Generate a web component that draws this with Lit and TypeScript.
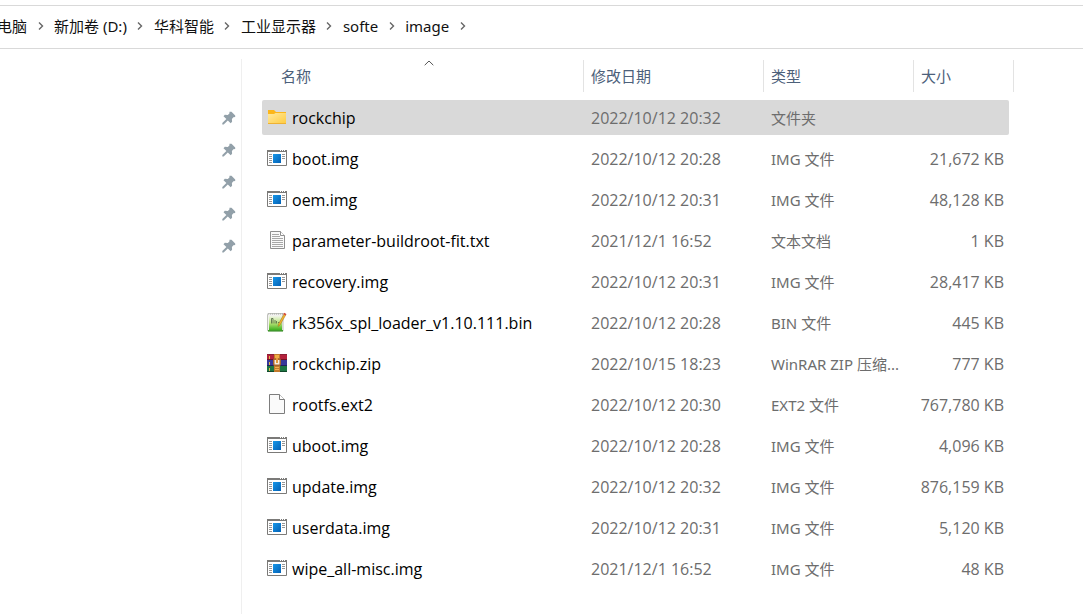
import { LitElement, html, svg, css, nothing } from "lit";
import { customElement, property } from "lit/decorators.js";

type IconKind = "folder" | "image" | "text" | "bin" | "archive" | "blank";

interface FileEntry {
  name: string;
  icon: IconKind;
  modified: string;
  type: string;
  size: string;
}

const CRUMBS = ["电脑", "新加卷 (D:)", "华科智能", "工业显示器", "softe", "image"];

const PINS = [1, 2, 3, 4, 5];

const FILES: FileEntry[] = [
  { name: "rockchip", icon: "folder", modified: "2022/10/12 20:32", type: "文件夹", size: "" },
  { name: "boot.img", icon: "image", modified: "2022/10/12 20:28", type: "IMG 文件", size: "21,672 KB" },
  { name: "oem.img", icon: "image", modified: "2022/10/12 20:31", type: "IMG 文件", size: "48,128 KB" },
  { name: "parameter-buildroot-fit.txt", icon: "text", modified: "2021/12/1 16:52", type: "文本文档", size: "1 KB" },
  { name: "recovery.img", icon: "image", modified: "2022/10/12 20:31", type: "IMG 文件", size: "28,417 KB" },
  { name: "rk356x_spl_loader_v1.10.111.bin", icon: "bin", modified: "2022/10/12 20:28", type: "BIN 文件", size: "445 KB" },
  { name: "rockchip.zip", icon: "archive", modified: "2022/10/15 18:23", type: "WinRAR ZIP 压缩...", size: "777 KB" },
  { name: "rootfs.ext2", icon: "blank", modified: "2022/10/12 20:30", type: "EXT2 文件", size: "767,780 KB" },
  { name: "uboot.img", icon: "image", modified: "2022/10/12 20:28", type: "IMG 文件", size: "4,096 KB" },
  { name: "update.img", icon: "image", modified: "2022/10/12 20:32", type: "IMG 文件", size: "876,159 KB" },
  { name: "userdata.img", icon: "image", modified: "2022/10/12 20:31", type: "IMG 文件", size: "5,120 KB" },
  { name: "wipe_all-misc.img", icon: "image", modified: "2021/12/1 16:52", type: "IMG 文件", size: "48 KB" },
];

const ICONS = {
  folder: svg`
    <defs>
      <linearGradient id="f" x1="0" y1="0" x2="1" y2="1">
        <stop offset="0" stop-color="#ffe9a0" /><stop offset="1" stop-color="#ffcb3d" />
      </linearGradient>
    </defs>
    <path d="M1 3h6l2 2h10v4H1z" fill="#fcb61a" />
    <path d="M1 7h6l1.500-1H19v11H1z" fill="url(#f)" />
    <path d="M1 16h18v1H1z" fill="#eeb133" />`,
  image: svg`
    <defs>
      <linearGradient id="b" x1="0" y1="0" x2="1" y2="1">
        <stop offset="0" stop-color="#1797e8" /><stop offset="1" stop-color="#0461b5" />
      </linearGradient>
    </defs>
    <path d="M.5 2.500h19v15H.5z" fill="#fff" stroke="#7b7a78" />
    <path d="M0 2h20v2H0z" fill="#7b7a78" />
    <path d="M13 2.500h1M15 2.500h1M17 2.500h1" stroke="#fff" />
    <path d="M2 6.500h3M2 8.500h3M2 10.500h3M2 12.500h3M2 14.500h3M15 6.500h3M15 8.500h3M15 10.500h3" stroke="#969696" />
    <path d="M6 6h8v9H6z" fill="url(#b)" />`,
  text: svg`
    <path d="M3.500 1.500h10l4 4v13h-14z" fill="#fafafa" stroke="#8f8f8f" />
    <path d="M13.500 1.500v4h4" fill="#fff" stroke="#8f8f8f" />
    <path d="M5 4.500h7M5 6.500h8M5 8.500h11M5 10.500h11M5 12.500h11M5 14.500h11M5 16.500h11" stroke="#a8a8a8" />`,
  blank: svg`
    <path d="M2.500.5h10l5 5v14h-15z" fill="#fafafa" stroke="#7d7d7d" />
    <path d="M12.500.5v5h5" fill="#fff" stroke="#7d7d7d" />`,
  bin: svg`
    <defs>
      <linearGradient id="g" x1="0" y1="0" x2="0" y2="1">
        <stop offset="0" stop-color="#f0f5e8" /><stop offset=".5" stop-color="#b8e478" /><stop offset="1" stop-color="#3fb020" />
      </linearGradient>
    </defs>
    <path d="M.5 2.500q0-1 1-1h14.500v17.500H1.500q-1 0-1-1z" fill="#f1f1ee" stroke="#bfc1bb" />
    <path d="M1 2h15" stroke="#a5a5a5" stroke-dasharray="1 1" />
    <path d="M2 4h13v14H2z" fill="url(#g)" />
    <path d="M1 18h15v1.500H1z" fill="#3f9b2b" />
    <path d="M4.500 11.500V6.500h1.500v5M8 11.500V8M9.500 11.500V9M11 10.500h1.500" fill="none" stroke="#4d6340" stroke-width=".8" />
    <path d="M17.300 1.500l1.700 1-6 10.500-2 1.500.5-2.500z" fill="#f3b52a" stroke="#9a6a25" stroke-width=".5" />
    <path d="M17 .8l2.300 1.300-.8 1.300-2.200-1.300z" fill="#d6453b" />`,
  archive: svg`
    <path d="M0 1h20v6H0z" fill="#b3213c" />
    <path d="M0 7h20v6H0z" fill="#38389a" />
    <path d="M0 13h20v6H0z" fill="#1d7543" />
    <path d="M0 1.500h20" stroke="#8a1e35" />
    <path d="M0 6.500h20" stroke="#741126" />
    <path d="M0 12.500h20" stroke="#20215f" />
    <path d="M0 18.500h20" stroke="#114829" />
    <path d="M2.500 3v3M2.500 9v3M2.500 15v3" stroke="#e0b84c" />
    <path d="M7 1h6v18H7z" fill="#c27a2c" />
    <path d="M8 2h4v3H8z" fill="#f0ad45" />
    <path d="M6 7q0-1.500 1.500-1.500h5Q14 5.500 14 7v4q0 2-2 2H8q-2 0-2-2z" fill="#a8652c" />
    <path d="M7.500 7h5v4.500h-5z" fill="#f8efe0" />
    <path d="M9 5h2v5H9z" fill="#e39a3c" />
    <path d="M8 14h4v1H8zM8 16h4v1H8z" fill="#f0b050" />`,
};

@customElement("file-icon")
export class FileIcon extends LitElement {
  static styles = css`
    :host { display: block; flex: none; width: 20px; height: 20px; margin-bottom: 2px; }
    .glyph { display: block; width: 20px; height: 20px; }
  `;

  @property() kind: IconKind = "blank";

  render() {
    return html`<svg class="glyph" viewBox="0 0 20 20" aria-hidden="true">${ICONS[this.kind]}</svg>`;
  }
}

@customElement("path-bar")
export class PathBar extends LitElement {
  static styles = css`
    :host { display: block; margin-top: 5px; border-top: 1px solid #d9d9d9; border-bottom: 1px solid #d9d9d9; overflow: hidden; font-family: "Noto Sans", "Noto Sans CJK SC", sans-serif; }
    .trail { display: flex; align-items: center; height: 40px; margin: 0 0 0 -3px; padding: 0 0 2px; list-style: none; }
    .crumb { display: flex; align-items: center; white-space: nowrap; }
    .link { color: #111; text-decoration: none; }
    .next { display: flex; align-items: center; justify-content: center; width: 27px; height: 24px; padding: 0; border: 0; background: none; }
    .chevron { display: block; width: 6px; height: 8px; }
  `;

  render() {
    return html`
      <nav aria-label="路径">
        <ol class="trail">
          ${CRUMBS.map(
            (name) => html`
              <li class="crumb">
                <a class="link" href="#">${name}</a>
                <button class="next" type="button" aria-label=${name}>
                  <svg class="chevron" viewBox="0 0 6 8" aria-hidden="true">
                    <path d="M1 .5L4.500 4 1 7.500" fill="none" stroke="#666" stroke-width="1.400" />
                  </svg>
                </button>
              </li>`
          )}
        </ol>
      </nav>`;
  }
}

@customElement("pin-list")
export class PinList extends LitElement {
  static styles = css`
    :host { display: block; flex: none; box-sizing: border-box; width: 242px; border-right: 1px solid #efefef; }
    .pins { margin: 0; padding: 43px 5px 0 0; list-style: none; }
    .item { display: flex; justify-content: flex-end; align-items: center; height: 32px; }
    .pin { padding: 0; border: 0; background: none; }
    .glyph { display: block; width: 14px; height: 14px; }
  `;

  render() {
    return html`
      <ul class="pins">
        ${PINS.map(
          () => html`
            <li class="item">
              <button class="pin" type="button" aria-label="取消固定">
                <svg class="glyph" viewBox="0 0 14 14" aria-hidden="true">
                  <path d="M7.500.8h2l3.700 3.600v1.600l-1.800.3-1.500 1.600.2 2.800-1.400 1.500L5.800 9.500 1.700 13.400H.3V12L4.400 8.100 1.500 5.300l1.300-1.500 3 .2 1.600-1.500z" fill="#92a0a9" />
                </svg>
              </button>
            </li>`
        )}
      </ul>`;
  }
}

@customElement("file-table")
export class FileTable extends LitElement {
  static styles = css`
    :host { display: block; flex: 1; min-width: 0; padding: 0 20px; }
    .table { table-layout: fixed; width: 752px; border-collapse: separate; border-spacing: 0 6px; margin-top: -6px; }
    .name-col { width: 322px; }
    .date-col { width: 180px; }
    .type-col { width: 150px; }
    .size-col { width: 95px; }
    .edge-col { width: 5px; }
    .head { box-sizing: border-box; height: 35px; padding: 1px 0 0; vertical-align: top; font-weight: 400; text-align: left; }
    .sort { display: block; box-sizing: border-box; width: 100%; height: 32px; padding: 0 7px; border: 0; border-right: 1px solid #e3e3e3; background: none; color: #4c607a; font: inherit; text-align: left; }
    .sort.first { display: grid; grid-template-rows: 6px 20px 6px; padding-left: 19px; }
    .arrow { width: 10px; height: 6px; justify-self: center; }
    .cell { height: 35px; padding: 0 7px; color: #6d6d6d; font-size: 16px; text-align: left; font-weight: 400; white-space: nowrap; }
    .cell.name { padding: 0 5px; color: #000; }
    .cell.type { font-family: "Noto Sans", "Noto Sans CJK SC", sans-serif; font-size: 15px; }
    .cell.size { padding: 0 5px 0 0; text-align: right; }
    .file { display: flex; align-items: center; gap: 5px; }
    .selected .cell { background: #d9d9d9; }
    .selected .name { border-radius: 2px 0 0 2px; }
    .selected .size { border-radius: 0 2px 2px 0; }
  `;

  render() {
    return html`
      <table class="table">
        <colgroup>
          <col class="name-col" /><col class="date-col" /><col class="type-col" /><col class="size-col" /><col class="edge-col" />
        </colgroup>
        <thead>
          <tr>
            <th class="head" scope="col" aria-sort="ascending">
              <button class="sort first" type="button">
                <svg class="arrow" viewBox="0 0 10 6" aria-hidden="true">
                  <path d="M.7 5.200L5 1l4.300 4.200" fill="none" stroke="#555" />
                </svg>
                <span>名称</span>
              </button>
            </th>
            <th class="head" scope="col"><button class="sort" type="button">修改日期</button></th>
            <th class="head" scope="col"><button class="sort" type="button">类型</button></th>
            <th class="head" scope="col" colspan="2"><button class="sort" type="button">大小</button></th>
          </tr>
        </thead>
        <tbody>
          ${FILES.map(
            (file, index) => html`
              <tr class=${index === 0 ? "selected" : nothing}>
                <th class="cell name" scope="row">
                  <span class="file"><file-icon kind=${file.icon}></file-icon><span>${file.name}</span></span>
                </th>
                <td class="cell">${file.modified}</td>
                <td class="cell type">${file.type}</td>
                <td class="cell size">${file.size}</td>
              </tr>`
          )}
        </tbody>
      </table>`;
  }
}

@customElement("app-root")
export class AppRoot extends LitElement {
  static styles = css`
    :host {
      display: flex;
      flex-direction: column;
      min-height: 100vh;
      background: #fff;
      font: 15px/20px "Open Sans", "Noto Sans CJK SC", sans-serif;
    }
    .body { display: flex; flex: 1; margin-top: 10px; }
  `;

  render() {
    return html`
      <path-bar></path-bar>
      <main class="body">
        <pin-list></pin-list>
        <file-table></file-table>
      </main>`;
  }
}
